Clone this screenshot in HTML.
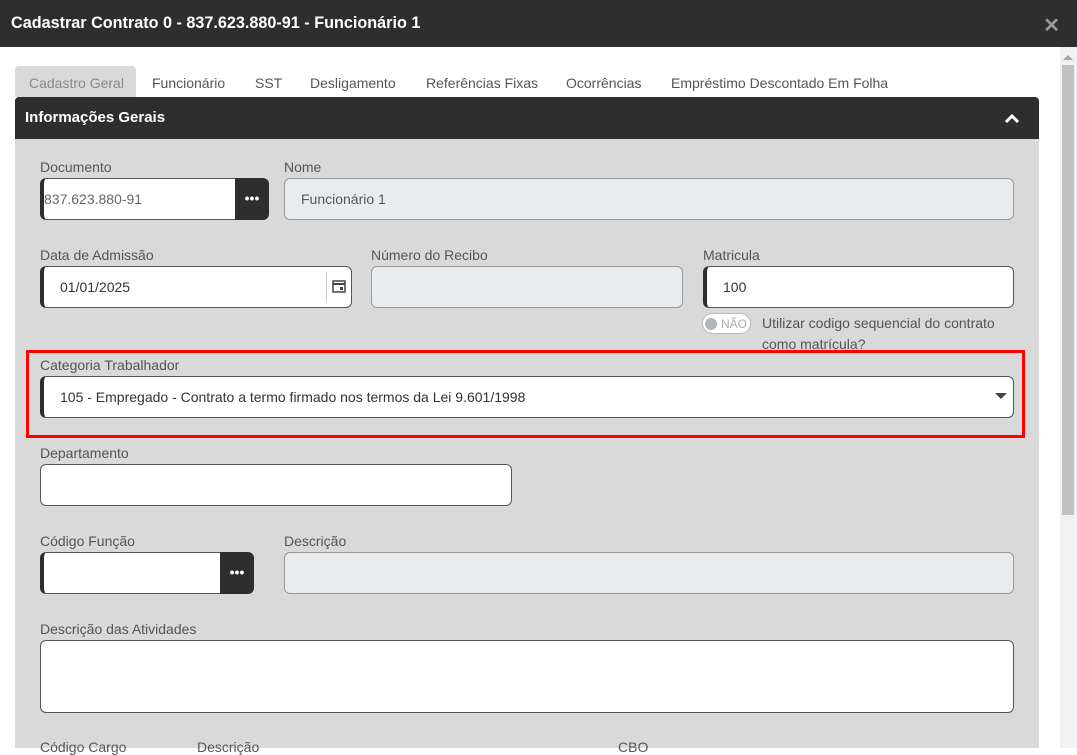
<!DOCTYPE html>
<html><head><meta charset="utf-8"><style>
*{box-sizing:border-box;margin:0;padding:0}
body{width:1077px;height:748px;overflow:hidden;background:#fff;font-family:"Liberation Sans",sans-serif;position:relative}
.a{position:absolute}
.hdr{left:0;top:0;width:1077px;height:47px;background:#2e2e2e;color:#fff;font-weight:bold;font-size:16.2px;padding:14px 0 0 11px}
.x{right:17px;top:13px;color:#999;font-size:20px;font-weight:bold}
.tab{top:75px;font-size:14px;color:#555}
.sec{left:15px;top:97px;width:1024px;height:42px;background:#2e2e2e;color:#fff;font-weight:bold;font-size:15px;padding:12px 0 0 10px;border-radius:4px 4px 0 0}
.panel{left:15px;top:139px;width:1024px;height:609px;background:#d9d9d9}
.lbl{font-size:14px;color:#555}
.in{height:42px;background:#fff;border:1px solid #555;border-radius:6px;font-size:14px;color:#333;padding:12px 0 0 16px}
.dis{background:#e9ecef;border-color:#999;color:#555}
.lb{border-left:4px solid #2e2e2e}
.btn{background:#2e2e2e;color:#fff;border-radius:0 6px 6px 0;font-weight:bold;text-align:center;font-size:14px;line-height:36px}
</style></head><body>
<div class="a hdr">Cadastrar Contrato 0 - 837.623.880-91 - Funcionário 1</div>
<div class="a x">✕</div>
<div class="a" style="left:15px;top:66px;width:121px;height:31px;background:#d9d9d9;border-radius:4px 4px 0 0"></div>
<div class="a tab" style="left:29px;color:#888">Cadastro Geral</div>
<div class="a tab" style="left:152px">Funcionário</div>
<div class="a tab" style="left:255px">SST</div>
<div class="a tab" style="left:310px">Desligamento</div>
<div class="a tab" style="left:426px">Referências Fixas</div>
<div class="a tab" style="left:566px">Ocorrências</div>
<div class="a tab" style="left:671px">Empréstimo Descontado Em Folha</div>
<div class="a sec">Informações Gerais</div>
<svg class="a" style="left:1004px;top:112px" width="16" height="12"><path d="M2 10L8 4L14 10" stroke="#fff" stroke-width="3" fill="none"/></svg>
<div class="a panel"></div>
<div class="a" style="left:1060px;top:47px;width:17px;height:701px;background:#f1f1f1"></div>
<div class="a" style="left:1062px;top:65px;width:12px;height:450px;background:#c1c1c1"></div>
<svg class="a" style="left:1063px;top:54px" width="10" height="6"><path d="M0 6L5 1L10 6Z" fill="#a3a3a3"/></svg>

<div class="a lbl" style="left:40px;top:159px">Documento</div>
<div class="a in lb" style="left:40px;top:178px;width:200px;padding-left:0;border-radius:6px 0 0 6px;color:#666">837.623.880-91</div>
<div class="a btn" style="left:235px;top:178px;width:34px;height:42px;line-height:40px">•••</div>
<div class="a lbl" style="left:284px;top:159px">Nome</div>
<div class="a in dis" style="left:284px;top:178px;width:730px">Funcionário 1</div>

<div class="a lbl" style="left:40px;top:247px">Data de Admissão</div>
<div class="a in lb" style="left:40px;top:266px;width:312px">01/01/2025</div>
<div class="a" style="left:326px;top:272px;width:1px;height:30px;background:#ccc"></div>
<svg class="a" style="left:332px;top:279px" width="14" height="14"><rect x="1" y="2" width="12" height="11" fill="none" stroke="#444" stroke-width="1.5"/><path d="M1 5H13" stroke="#444" stroke-width="2"/><rect x="8" y="8" width="3" height="3" fill="#444"/></svg>
<div class="a lbl" style="left:371px;top:247px">Número do Recibo</div>
<div class="a in dis" style="left:371px;top:266px;width:312px"></div>
<div class="a lbl" style="left:703px;top:247px">Matricula</div>
<div class="a in lb" style="left:703px;top:266px;width:311px">100</div>
<div class="a" style="left:702px;top:313px;width:49px;height:21px;border:1px solid #bbb;border-radius:11px;background:#fff"></div>
<div class="a" style="left:705px;top:318px;width:12px;height:12px;border-radius:50%;background:#adb5bd"></div>
<div class="a" style="left:721px;top:317px;font-size:12px;color:#aaa">NÃO</div>
<div class="a lbl" style="left:762px;top:313px;line-height:21px">Utilizar codigo sequencial do contrato<br>como matrícula?</div>

<div class="a" style="left:26px;top:350px;width:999px;height:88px;border:3px solid #f00"></div>
<div class="a lbl" style="left:40px;top:357px">Categoria Trabalhador</div>
<div class="a in lb" style="left:40px;top:376px;width:974px">105 - Empregado - Contrato a termo firmado nos termos da Lei 9.601/1998</div>
<svg class="a" style="left:995px;top:393px" width="12" height="7"><path d="M0 0H12L6 6Z" fill="#444"/></svg>

<div class="a lbl" style="left:40px;top:445px">Departamento</div>
<div class="a in" style="left:40px;top:464px;width:472px"></div>

<div class="a lbl" style="left:40px;top:533px">Código Função</div>
<div class="a in lb" style="left:40px;top:552px;width:186px;border-radius:6px 0 0 6px"></div>
<div class="a btn" style="left:220px;top:552px;width:34px;height:42px;line-height:40px">•••</div>
<div class="a lbl" style="left:284px;top:533px">Descrição</div>
<div class="a in dis" style="left:284px;top:552px;width:730px"></div>

<div class="a lbl" style="left:40px;top:621px">Descrição das Atividades</div>
<div class="a in" style="left:40px;top:640px;width:974px;height:73px"></div>

<div class="a lbl" style="left:40px;top:739px">Código Cargo</div>
<div class="a lbl" style="left:197px;top:739px">Descrição</div>
<div class="a lbl" style="left:618px;top:739px">CBO</div>
</body></html>
